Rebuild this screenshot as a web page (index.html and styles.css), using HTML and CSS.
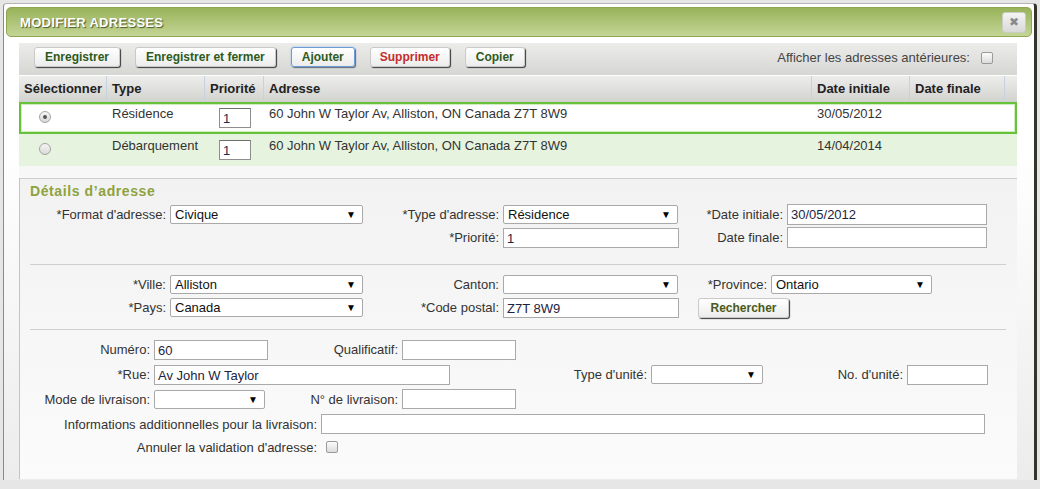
FILE: index.html
```html
<!DOCTYPE html>
<html lang="fr">
<head>
<meta charset="utf-8">
<title>Modifier adresses</title>
<link rel="stylesheet" href="styles.css">
</head>
<body>
<div class="dialog">
  <div class="titlebar">
    <span class="title">MODIFIER ADRESSES</span>
    <span class="close">✖</span>
  </div>
  <div class="content">
    <div class="toolbar">
      <span class="btn">Enregistrer</span>
      <span class="btn">Enregistrer et fermer</span>
      <span class="btn focused">Ajouter</span>
      <span class="btn danger">Supprimer</span>
      <span class="btn">Copier</span>
      <span class="spacer"></span>
      <span class="show-old">Afficher les adresses antérieures:</span>
      <span class="checkbox"></span>
    </div>
    <div class="grid header">
      <div class="hcell">Sélectionner</div>
      <div class="hcell">Type</div>
      <div class="hcell">Priorité</div>
      <div class="hcell">Adresse</div>
      <div class="hcell">Date initiale</div>
      <div class="hcell">Date finale</div>
      <div class="hcell"></div>
    </div>
    <div class="grid row selected">
      <div class="cell radio-cell"><span class="radio on"></span></div>
      <div class="cell">Résidence</div>
      <div class="cell prio-cell"><span class="prio">1</span></div>
      <div class="cell">60 John W Taylor Av, Alliston, ON Canada Z7T 8W9</div>
      <div class="cell">30/05/2012</div>
      <div class="cell"></div>
      <div class="cell"></div>
    </div>
    <div class="grid row alt">
      <div class="cell radio-cell"><span class="radio"></span></div>
      <div class="cell">Débarquement</div>
      <div class="cell prio-cell"><span class="prio">1</span></div>
      <div class="cell">60 John W Taylor Av, Alliston, ON Canada Z7T 8W9</div>
      <div class="cell">14/04/2014</div>
      <div class="cell"></div>
      <div class="cell"></div>
    </div>
    <div class="gap"></div>
    <div class="details">
      <div class="heading">Détails d’adresse</div>

      <div class="frow r23">
        <span class="lbl w150">*Format d'adresse:</span>
        <span class="sel w193">Civique</span>
        <span class="lbl w140">*Type d'adresse:</span>
        <span class="sel w175">Résidence</span>
        <span class="lbl w109">*Date initiale:</span>
        <span class="inp w200 tall">30/05/2012</span>
      </div>
      <div class="frow r23">
        <span class="w343"></span>
        <span class="lbl w140">*Priorité:</span>
        <span class="inp w176">1</span>
        <span class="lbl w108">Date finale:</span>
        <span class="inp w200 tall"></span>
      </div>
      <div class="sep sep1"></div>
      <div class="frow r23">
        <span class="lbl w150">*Ville:</span>
        <span class="sel w193">Alliston</span>
        <span class="lbl w140">Canton:</span>
        <span class="sel w175"></span>
        <span class="lbl w93">*Province:</span>
        <span class="sel w161">Ontario</span>
      </div>
      <div class="frow r23">
        <span class="lbl w150">*Pays:</span>
        <span class="sel w193">Canada</span>
        <span class="lbl w140">*Code postal:</span>
        <span class="inp w176">Z7T 8W9</span>
        <span class="btn search">Rechercher</span>
      </div>
      <div class="sep sep2"></div>
      <div class="frow r25">
        <span class="lbl w134">Numéro:</span>
        <span class="inp w114">60</span>
        <span class="lbl w134">Qualificatif:</span>
        <span class="inp w114"></span>
      </div>
      <div class="frow r25">
        <span class="lbl w134">*Rue:</span>
        <span class="inp w296">Av John W Taylor</span>
        <span class="lbl w201">Type d'unité:</span>
        <span class="sel w112"></span>
        <span class="lbl w144">No. d'unité:</span>
        <span class="inp w81"></span>
      </div>
      <div class="frow r24">
        <span class="lbl w134">Mode de livraison:</span>
        <span class="sel w111"></span>
        <span class="lbl w137">N° de livraison:</span>
        <span class="inp w114"></span>
      </div>
      <div class="frow r26">
        <span class="lbl w301">Informations additionnelles pour la livraison:</span>
        <span class="inp w664"></span>
      </div>
      <div class="frow r20">
        <span class="lbl w301">Annuler la validation d'adresse:</span>
        <span class="checkbox cb-form"></span>
      </div>
    </div>
  </div>
</div>
</body>
</html>
```

FILE: styles.css
```css
* { box-sizing: border-box; }

html, body {
  margin: 0;
  padding: 0;
  height: 100%;
  overflow: hidden;
}

body {
  background: #e6e6e6;
  font-family: "Liberation Sans", Arial, sans-serif;
  font-size: 13px;
  color: #333;
}

.dialog {
  margin: 3px 0 0 3px;
  width: 1034px;
  height: 477px;
  padding: 3px 2px 0 2px;
  border-top: 1px solid #b4b4b4;
  border-left: 1px solid #8c8e6c;
  border-right: 3px solid #34352a;
  border-radius: 4px 4px 0 0;
  background: linear-gradient(#ffffff 0, #ffffff 30%, #ececec 100%);
}

.titlebar {
  height: 30px;
  border: 1px solid #8fa552;
  border-radius: 5px;
  background: linear-gradient(#98b35a, #c4d596);
  display: flex;
  align-items: center;
  justify-content: space-between;
  padding: 0 5px 0 13px;
}

.title {
  color: #fff;
  font-weight: bold;
  font-size: 13px;
  text-shadow: 1px 1px 1px #4d5a2a;
  letter-spacing: 0.3px;
}

.close {
  width: 24px;
  height: 21px;
  border: 1px solid #c9ccc1;
  border-radius: 3px;
  background: linear-gradient(#f4f4f4, #d8d8d8);
  color: #8a8a8a;
  font-size: 12px;
  display: flex;
  align-items: center;
  justify-content: center;
}

.content {
  margin: 6px 0 0 13px;
  width: 998px;
}

/* toolbar */
.toolbar {
  height: 32px;
  background: linear-gradient(#ececea, #d6d6d3);
  display: flex;
  align-items: flex-start;
  padding: 4px 24px 0 15px;
  gap: 15px;
}

.btn {
  height: 20px;
  padding: 0 10px;
  border: 1px solid #c9c9c9;
  border-radius: 3px;
  background: linear-gradient(#ffffff, #ececec);
  box-shadow: 1px 1px 1px #3a3a3a;
  font-weight: bold;
  font-size: 12px;
  color: #2d5a1c;
  display: inline-flex;
  align-items: center;
  white-space: nowrap;
}

.btn.focused {
  border-color: #6e9bd8;
  box-shadow: 0 0 2px #8fb6ee, 1px 1px 1px #555;
}

.btn.danger { color: #c42c2c; padding: 0 9px; }

.spacer { flex: 1; }

.show-old {
  margin-top: 3px;
  color: #444;
  font-size: 13px;
}

.checkbox {
  display: inline-block;
  width: 12px;
  height: 12px;
  border: 1px solid #9a9a9a;
  border-radius: 2px;
  background: linear-gradient(#fbfbfb, #dcdcdc);
}

.toolbar .checkbox {
  margin: 5px 0 0 -4px;
}

/* table */
.grid {
  display: grid;
  grid-template-columns: 87px 98px 59px 548px 98px 95px 13px;
}

.header {
  height: 26px;
  margin-top: 1px;
  background: linear-gradient(#ededeb, #d3d3d0);
  border-bottom: 1px solid #cfcfcf;
}

.hcell {
  font-weight: bold;
  color: #222;
  line-height: 25px;
  padding-left: 5px;
  border-left: 1px solid #c6d2dd;
  white-space: nowrap;
}

.hcell:first-child { border-left: none; }

.row {
  height: 32px;
}

.row.selected {
  background: #fff;
  box-shadow: inset 0 0 0 2px #67c13a, inset 0 0 0 3px #cfeebe;
}

.row.alt {
  background: #e6f4df;
}

.cell {
  padding: 4px 0 0 6px;
  line-height: 15px;
  white-space: nowrap;
}

.radio-cell {
  padding: 9px 0 0 20px;
}

.radio {
  display: block;
  width: 12px;
  height: 12px;
  border-radius: 50%;
  border: 1px solid #a4a4a4;
  background: linear-gradient(#f6f6f6, #d9d9d9);
  position: relative;
}

.radio.on::after {
  content: "";
  position: absolute;
  left: 3px;
  top: 3px;
  width: 4px;
  height: 4px;
  border-radius: 50%;
  background: #555;
}

.prio-cell { padding: 6px 0 0 15px; }

.prio {
  display: block;
  width: 32px;
  height: 20px;
  border: 1px solid #8e8e8e;
  border-top-color: #6f6f6f;
  background: #fff;
  padding: 2px 0 0 3px;
  line-height: 15px;
  color: #1a2a4a;
}

.gap {
  height: 12px;
  background: #f7f7f7;
}

/* details */
.details {
  height: 301px;
  border-top: 1px solid #cdcdcd;
  border-left: 1px solid #c4c4c4;
  background: linear-gradient(#f2f2f2, #fbfbfb);
}

.heading {
  margin: 3px 0 3px 10px;
  height: 18px;
  line-height: 18px;
  font-weight: bold;
  font-size: 14px;
  color: #8ea23e;
  letter-spacing: 0.6px;
}

.frow {
  display: flex;
  align-items: center;
}

.r23 { height: 23px; }
.r24 { height: 24px; }
.r25 { height: 25px; }
.r26 { height: 26px; }
.r20 { height: 20px; }

.lbl {
  text-align: right;
  padding-right: 4px;
  white-space: nowrap;
  flex: none;
}

.sel, .inp {
  flex: none;
  background: #fff;
  border: 1px solid #a9a9a9;
  color: #111;
  line-height: 16px;
  padding-left: 4px;
  white-space: nowrap;
}

.sel {
  height: 19px;
  border-radius: 2px;
  position: relative;
  padding-top: 1px;
}

.sel::after {
  content: "▼";
  position: absolute;
  right: 6px;
  top: 2px;
  font-size: 10px;
  line-height: 14px;
  color: #000;
}

.inp {
  height: 20px;
  padding-top: 2px;
  padding-left: 3px;
  color: #1c2440;
}

.inp.tall { height: 21px; }

.sep {
  height: 1px;
  background: #cfcfcf;
  margin-left: 10px;
  width: 976px;
}

.sep1 { margin-top: 15px; margin-bottom: 8px; }
.sep2 { margin-top: 10px; margin-bottom: 7px; }

.search {
  margin-left: 19px;
  width: 91px;
  justify-content: center;
  color: #4a5a1a;
}

.cb-form { margin-left: 5px; }

.w81 { width: 81px; }
.w93 { width: 93px; }
.w108 { width: 108px; }
.w109 { width: 109px; }
.w111 { width: 111px; }
.w112 { width: 112px; }
.w114 { width: 114px; }
.w134 { width: 134px; }
.w137 { width: 137px; }
.w140 { width: 140px; }
.w144 { width: 144px; }
.w150 { width: 150px; }
.w161 { width: 161px; }
.w175 { width: 175px; }
.w176 { width: 176px; }
.w193 { width: 193px; }
.w200 { width: 200px; }
.w201 { width: 201px; }
.w296 { width: 296px; }
.w301 { width: 301px; }
.w343 { width: 343px; flex: none; }
.w664 { width: 664px; }
```
